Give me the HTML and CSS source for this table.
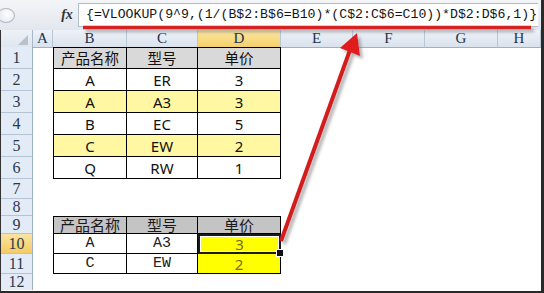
FILE: index.html
```html
<!DOCTYPE html>
<html lang="zh">
<head>
<meta charset="utf-8">
<link rel="stylesheet" href="styles.css">
</head>
<body>
<div class="screen">
  <div class="fbar">
    <div class="namebox"><span class="knob"></span></div>
    <div class="fx">fx</div>
    <div class="formula">{=VLOOKUP(9^9,(1/(B$2:B$6=B10)*(C$2:C$6=C10))*D$2:D$6,1)}</div>
  </div>
  <div class="sheet">
    <div class="row colhead">
      <div class="corner"><svg width="33" height="17" viewBox="0 0 33 17"><polygon points="27,5 27,15 17,15" fill="#b9c2cc"/></svg></div>
      <div class="ch">A</div><div class="ch">B</div><div class="ch">C</div><div class="ch sel">D</div>
      <div class="ch">E</div><div class="ch">F</div><div class="ch">G</div><div class="ch">H</div>
    </div>
    <div class="row h22">
      <div class="rh">1</div><div class="c"></div>
      <div class="t l top hd">产品名称</div><div class="t top hd">型号</div><div class="t top hd">单价</div><div class="c rest"></div>
    </div>
    <div class="row h22">
      <div class="rh">2</div><div class="c"></div>
      <div class="t l">A</div><div class="t">ER</div><div class="t">3</div><div class="c rest"></div>
    </div>
    <div class="row h22">
      <div class="rh">3</div><div class="c"></div>
      <div class="t l hi">A</div><div class="t hi">A3</div><div class="t hi">3</div><div class="c rest"></div>
    </div>
    <div class="row h22">
      <div class="rh">4</div><div class="c"></div>
      <div class="t l">B</div><div class="t">EC</div><div class="t">5</div><div class="c rest"></div>
    </div>
    <div class="row h22">
      <div class="rh">5</div><div class="c"></div>
      <div class="t l hi">C</div><div class="t hi">EW</div><div class="t hi">2</div><div class="c rest"></div>
    </div>
    <div class="row h22">
      <div class="rh">6</div><div class="c"></div>
      <div class="t l">Q</div><div class="t">RW</div><div class="t">1</div><div class="c rest"></div>
    </div>
    <div class="row h20">
      <div class="rh">7</div><div class="c"></div>
    </div>
    <div class="row h17">
      <div class="rh">8</div><div class="c"></div>
    </div>
    <div class="row h18">
      <div class="rh">9</div><div class="c"></div>
      <div class="t l top hd2">产品名称</div><div class="t top hd2">型号</div><div class="t top hd2">单价</div><div class="c rest"></div>
    </div>
    <div class="row h20">
      <div class="rh sel">10</div><div class="c"></div>
      <div class="t l mono">A</div><div class="t mono">A3</div><div class="t yel pick">3</div><div class="c rest"></div>
    </div>
    <div class="row h20">
      <div class="rh">11</div><div class="c"></div>
      <div class="t l mono">C</div><div class="t mono">EW</div><div class="t yel">2</div><div class="c rest"></div>
    </div>
    <div class="row h16">
      <div class="rh last">12</div><div class="c"></div>
    </div>
  </div>
  <svg class="annot" width="544" height="293" viewBox="0 0 544 293">
    <defs>
      <filter id="sh" x="-20%" y="-20%" width="140%" height="140%">
        <feDropShadow dx="3" dy="3" stdDeviation="1.8" flood-color="#7a7a7a" flood-opacity="0.55"/>
      </filter>
    </defs>
    <g filter="url(#sh)">
      <line x1="83" y1="27.5" x2="531" y2="27.5" stroke="#d62424" stroke-width="3.5"/>
      <line x1="281" y1="241" x2="350" y2="50" stroke="#d41e1e" stroke-width="4"/>
      <polygon points="357,33 360,56 340,48" fill="#e01e1e"/>
    </g>
  </svg>
</div>
</body>
</html>
```

FILE: styles.css
```css
* { box-sizing: border-box; }
body { margin: 0; background: #fff; }

.screen {
  position: relative;
  width: 544px;
  height: 293px;
  overflow: hidden;
  background: #fff;
  font-family: "Noto Sans", "Noto Sans CJK SC", sans-serif;
  color: #111;
}

/* formula bar */
.fbar {
  height: 30px;
  display: flex;
  padding: 3px 3px 3px 0;
  background: linear-gradient(#f3f5f8, #e2e7ee);
  border-right: 3px solid #2a2a2a;
}
.namebox {
  width: 56px;
  display: flex;
  align-items: center;
}
.knob {
  width: 18px;
  height: 15px;
  margin-left: -3px;
  border-radius: 50%;
  border: 1px solid #aeb7c3;
  background: radial-gradient(circle at 60% 40%, #ffffff, #dde3ea);
}
.fx {
  width: 22px;
  display: flex;
  align-items: center;
  justify-content: center;
  font: italic bold 14px "Liberation Serif", serif;
  color: #333;
}
.formula {
  flex: 1;
  background: #fff;
  border: 1px solid #b3bcc9;
  border-right: none;
  padding-left: 7px;
  font: 13.2px "Liberation Mono", monospace;
  line-height: 22px;
  white-space: nowrap;
  overflow: hidden;
  color: #151515;
}

/* sheet */
.sheet {
  height: 263px;
  border-left: 1px solid #333;
  border-right: 3px solid #2a2a2a;
  border-bottom: 2px solid #2a2a2a;
}
.row {
  display: grid;
  grid-template-columns: 32px 20px 74px 71px 83px 72px 72px 73px 1fr;
}
.colhead { height: 17px; }
.h22 { height: 22px; }
.h20 { height: 20px; }
.h18 { height: 18px; }
.h17 { height: 17px; }
.h16 { height: 16px; }

.corner {
  background: linear-gradient(#eef2f7, #dfe6ef);
  border-right: 1px solid #a8b8ca;
  border-bottom: 1px solid #9fb0c4;
}
.corner svg { display: block; }
.ch {
  background: linear-gradient(#eef2f8, #dae2ed);
  border-right: 1px solid #b9c6d6;
  border-bottom: 1px solid #9fb0c4;
  font: 15px "Liberation Serif", serif;
  line-height: 16px;
  text-align: center;
  color: #22324a;
}
.ch.sel {
  background: linear-gradient(#fbe6a2, #f5d06a);
  border-bottom-color: #c9a34a;
}
.rh {
  display: flex;
  align-items: center;
  justify-content: center;
  background: #e3ebf6;
  border-right: 1px solid #9fb0c4;
  border-bottom: 1px solid #b4c4d7;
  font: 16px "Liberation Serif", serif;
  line-height: 16px;
  color: #2a3a4c;
}
.rh.sel { background: linear-gradient(#fbe3a2, #f4cc62); }
.rh.last { border-bottom: none; }
.rest { grid-column: 6 / -1; }

/* table cells */
.t {
  display: flex;
  align-items: center;
  justify-content: center;
  border-right: 1px solid #000;
  border-bottom: 1px solid #000;
  font-size: 15px;
  line-height: 16px;
  background: #fff;
}
.t.l { border-left: 1px solid #000; }
.t.top { border-top: 1px solid #000; }
.hd { background: #d9d9d9; font-family: "Noto Sans CJK SC", sans-serif; font-size: 14.5px; }
.hd2 { background: #c4c4c4; font-family: "Noto Sans CJK SC", sans-serif; font-size: 15px; color: #1a1a1a; }
.hi { background: #fff7a2; }
.mono { font: 15px/16px "Liberation Mono", monospace; color: #222; }
.yel { background: #ffff00; color: #7c6c14; font-size: 15px; line-height: 14px; }
.pick {
  position: relative;
  border: 2px solid #1a1a1a;
  box-shadow: inset 0 0 0 1px #fff;
}
.pick::after {
  content: "";
  position: absolute;
  right: -5px;
  bottom: -5px;
  width: 6px;
  height: 6px;
  background: #111;
  border: 1px solid #fff;
}

/* annotation overlay */
.annot {
  position: absolute;
  left: 0;
  top: 0;
  pointer-events: none;
}
```
